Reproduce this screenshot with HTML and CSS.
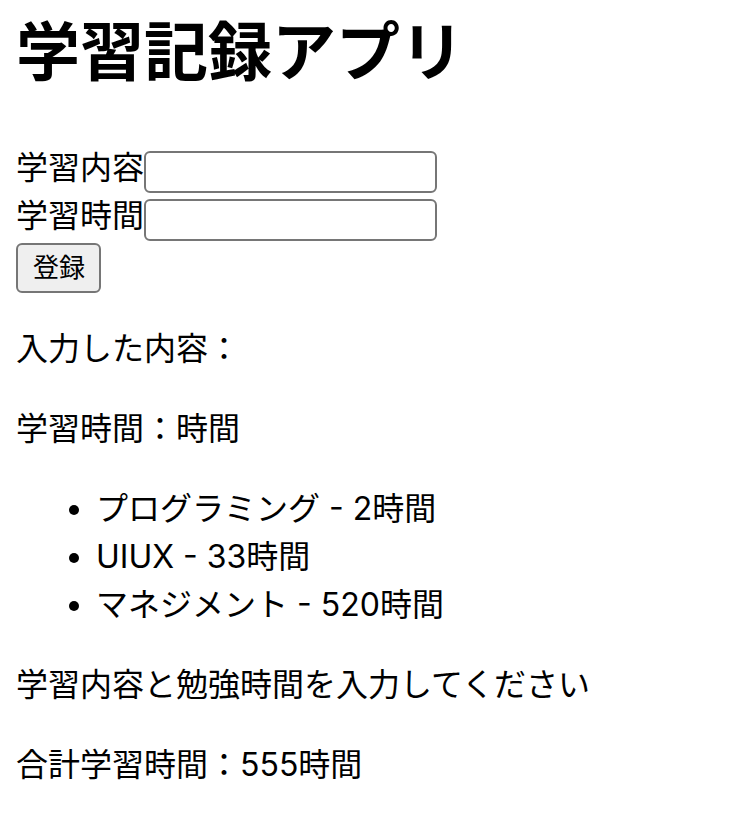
FILE: index.html
```html
<!DOCTYPE html>
<html lang="ja">
<head>
    <meta charset="UTF-8">
    <meta name="viewport" content="width=device-width, initial-scale=1.0">
    <title>学習記録アプリ</title>
    <link rel="stylesheet" href="styles.css">
</head>
<body>

    <h1>学習記録アプリ</h1>

    <!-- 入力フォーム -->
    <div class="form-row">
        <label for="title">学習内容</label><input type="text" id="title">
    </div>
    <div class="form-row">
        <label for="time">学習時間</label><input type="number" id="time">
    </div>
    <button type="button">登録</button>

    <p>入力した内容：</p>
    <p>学習時間：時間</p>

    <!-- 記録一覧 -->
    <ul class="records">
        <li>プログラミング - 2時間</li>
        <li>UIUX - 33時間</li>
        <li>マネジメント - 520時間</li>
    </ul>

    <p>学習内容と勉強時間を入力してください</p>
    <p>合計学習時間：555時間</p>

</body>
</html>
```

FILE: styles.css
```css
body {
    font-family: Inter, "Noto Sans CJK JP", sans-serif;
    font-size: 32px;
    line-height: 48px;
    color: #000;
    background-color: #fff;
    margin: 0 16px;
}
h1 {
    font-size: 64px;
    line-height: 96px;
    font-weight: bold;
    margin: 4px 0 44px;
}
.form-row {
    height: 48px;
}
input[type="text"], input[type="number"] {
    width: 293px;
    height: 42px;
    box-sizing: border-box;
    border: 2px solid #767676;
    border-radius: 6px;
    padding: 2px 4px;
    font-size: 26px;
    vertical-align: -1px;
    -moz-appearance: textfield;
}
input::-webkit-outer-spin-button, input::-webkit-inner-spin-button {
    -webkit-appearance: none;
    margin: 0;
}
button {
    font-family: Inter, "Noto Sans CJK JP", sans-serif;
    font-size: 26px;
    line-height: 34px;
    height: 50px;
    padding: 0 14px 0 15px;
    margin-top: 3px;
    background-color: #efefef;
    border: 2px solid #767676;
    border-radius: 6px;
    color: #000;
}
p {
    margin: 32px 0;
}
.records {
    margin: 32px 0;
    padding-left: 80px;
}
```
